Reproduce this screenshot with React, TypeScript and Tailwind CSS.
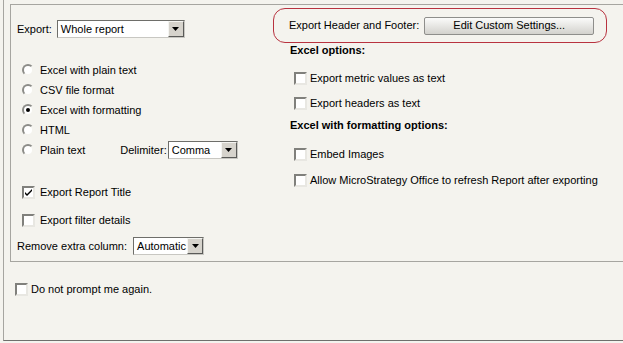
import React from "react";

const font = { fontFamily: '"Liberation Sans", Arial, sans-serif' };

const Radio = ({ checked }: { checked?: boolean }) => (
  <span className="relative w-[12px] h-[12px] rounded-full bg-white border-2 border-t-[#8c8c88] border-l-[#8c8c88] border-b-[#f4f3ee] border-r-[#f4f3ee] shrink-0 flex items-center justify-center">
    {checked && <span className="w-[4px] h-[4px] rounded-full bg-black" />}
  </span>
);

const Check = ({ checked }: { checked?: boolean }) => (
  <span className="w-[13px] h-[13px] bg-white border-2 border-t-[#80807c] border-l-[#80807c] border-b-[#e8e7e2] border-r-[#e8e7e2] shrink-0 flex items-center justify-center">
    {checked && (
      <svg width="9" height="9" viewBox="0 0 9 9">
        <path d="M1 4 L3 6 L8 1 L8 3 L3 8 L1 6 Z" fill="#000" />
      </svg>
    )}
  </span>
);

const Select = ({ value, width }: { value: string; width: string }) => (
  <div className={`${width} h-[18px] bg-white border border-t-[#6e6e6a] border-l-[#6e6e6a] border-b-[#c8c7c2] border-r-[#c8c7c2] flex items-center`}>
    <span className="flex-1 pl-[3px] text-[11px] leading-none text-black">{value}</span>
    <span className="w-[16px] h-[16px] bg-[#d6d3cc] border border-t-[#f5f5f2] border-l-[#f5f5f2] border-b-[#5a5a58] border-r-[#5a5a58] flex items-center justify-center">
      <svg width="7" height="4" viewBox="0 0 7 4">
        <path d="M0 0 H7 L3.5 4 Z" fill="#000" />
      </svg>
    </span>
  </div>
);

const RadioRow = ({ label, checked, children }: { label: string; checked?: boolean; children?: React.ReactNode }) => (
  <div className="h-[20px] flex items-center pl-[5px]">
    <Radio checked={checked} />
    <span className="ml-[6px]">{label}</span>
    {children}
  </div>
);

const CheckRow = ({ label, checked, gap = "ml-[3px]" }: { label: string; checked?: boolean; gap?: string }) => (
  <div className="h-[20px] flex items-center">
    <Check checked={checked} />
    <span className={gap}>{label}</span>
  </div>
);

export default function App() {
  return (
    <div className="w-[623px] h-[343px] bg-[#f4f3ee] overflow-hidden text-[11px] text-black" style={font}>
      <div className="ml-[3px] h-[341px] border-l border-b border-l-[#a6a5a0] border-b-[#6f6f6c] pl-[6px] flex flex-col">
        <div className="mt-[4px] h-[258px] border-t border-l border-b border-[#a6a5a0] flex">
          {/* left column */}
          <div className="w-[262px] pl-[6px] flex flex-col">
            <div className="mt-[15px] h-[18px] flex items-center">
              <span className="mr-[5px]">Export:</span>
              <Select value="Whole report" width="w-[128px]" />
            </div>
            <div className="mt-[22px] flex flex-col">
              <RadioRow label="Excel with plain text" />
              <RadioRow label="CSV file format" />
              <RadioRow label="Excel with formatting" checked />
              <RadioRow label="HTML" />
              <RadioRow label="Plain text">
                <span className="ml-[35px] mr-[1px]">Delimiter:</span>
                <Select value="Comma" width="w-[70px]" />
              </RadioRow>
            </div>
            <div className="mt-[22px] pl-[5px] flex flex-col gap-[8px]">
              <CheckRow label="Export Report Title" checked gap="ml-[5px]" />
              <CheckRow label="Export filter details" gap="ml-[5px]" />
            </div>
            <div className="mt-[7px] h-[18px] flex items-center">
              <span className="mr-[6px]">Remove extra column:</span>
              <Select value="Automatic" width="w-[71px]" />
            </div>
          </div>
          {/* right column */}
          <div className="flex-1 flex flex-col">
            <div className="mt-[3px] w-[334px] h-[35px] border border-[#b8323f] rounded-[12px] pl-[15px] flex items-center">
              <span>Export Header and Footer:</span>
              <button className="ml-[5px] w-[170px] h-[18px] rounded-[2px] border border-[#8e8e8b] bg-gradient-to-b from-[#fbfbfa] to-[#d3d2cd] text-[11px] leading-none" style={font}>
                Edit Custom Settings...
              </button>
            </div>
            <div className="pl-[17px] flex flex-col">
              <div className="h-[14px] flex items-center font-bold">Excel options:</div>
              <div className="mt-[11px] pl-[4px] flex flex-col gap-[5px]">
                <CheckRow label="Export metric values as text" />
                <CheckRow label="Export headers as text" />
              </div>
              <div className="mt-[5px] h-[14px] flex items-center font-bold">Excel with formatting options:</div>
              <div className="mt-[12px] pl-[4px] flex flex-col gap-[6px]">
                <CheckRow label="Embed Images" />
                <CheckRow label="Allow MicroStrategy Office to refresh Report after exporting" />
              </div>
            </div>
          </div>
        </div>
        <div className="mt-[17px] pl-[5px]">
          <CheckRow label="Do not prompt me again." />
        </div>
      </div>
    </div>
  );
}
